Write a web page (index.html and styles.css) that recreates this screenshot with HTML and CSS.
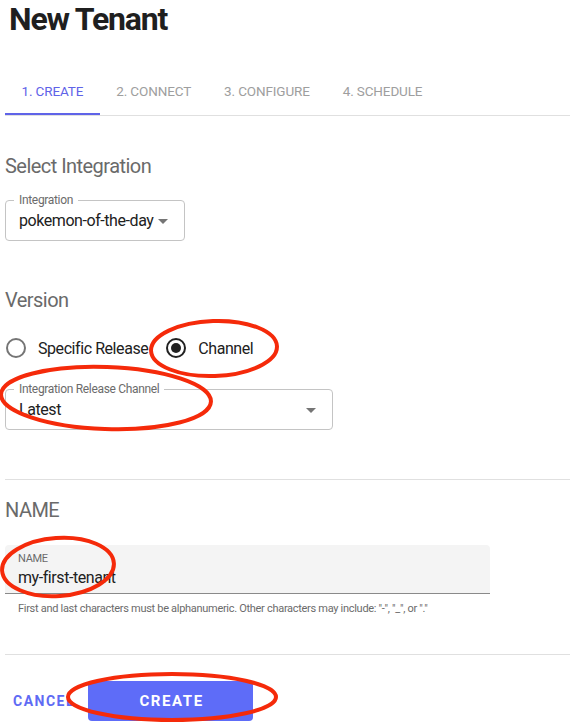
FILE: index.html
```html
<!DOCTYPE html>
<html>
<head>
<meta charset="utf-8">
<link rel="stylesheet" href="styles.css">
</head>
<body>
<div class="page">
  <h1 class="title">New Tenant</h1>
  <div class="tabs">
    <div class="tab active">1. Create</div>
    <div class="tab">2. Connect</div>
    <div class="tab">3. Configure</div>
    <div class="tab">4. Schedule</div>
  </div>

  <h2 class="heading h-integration">Select Integration</h2>
  <div class="outlined select-integration">
    <span class="notch-label">Integration</span>
    <span class="value">pokemon-of-the-day</span>
    <svg class="arrow" width="10" height="5" viewBox="0 0 10 5"><path d="M0 0L5 5L10 0Z" fill="#757575"/></svg>
  </div>

  <h2 class="heading h-version">Version</h2>
  <div class="radios">
    <label class="radio">
      <svg width="20" height="20" viewBox="0 0 20 20"><circle cx="10" cy="10" r="9" fill="none" stroke="#757575" stroke-width="2"/></svg>
      <span>Specific Release</span>
    </label>
    <label class="radio">
      <svg width="20" height="20" viewBox="0 0 20 20"><circle cx="10" cy="10" r="9" fill="none" stroke="#212121" stroke-width="2"/><circle cx="10" cy="10" r="5" fill="#212121"/></svg>
      <span>Channel</span>
    </label>
  </div>
  <div class="outlined select-channel">
    <span class="notch-label">Integration Release Channel</span>
    <span class="value">Latest</span>
    <svg class="arrow" width="10" height="5" viewBox="0 0 10 5"><path d="M0 0L5 5L10 0Z" fill="#757575"/></svg>
  </div>

  <hr class="divider d1">

  <h2 class="heading h-name">NAME</h2>
  <div class="filled">
    <span class="filled-label">NAME</span>
    <span class="filled-value">my-first-tenant</span>
  </div>
  <div class="helper">First and last characters must be alphanumeric. Other characters may include: "-", "_", or "."</div>

  <hr class="divider d2">

  <div class="actions">
    <button class="btn-text">Cancel</button>
    <button class="btn-primary">Create</button>
  </div>

  <svg class="annotations" width="570" height="726" viewBox="0 0 570 726">
    <g fill="none" stroke="#f52a0a" stroke-width="4">
      <ellipse cx="214" cy="348.5" rx="63" ry="27.5" transform="rotate(-2 214 348.5)"/>
      <ellipse cx="106" cy="398" rx="105" ry="31" transform="rotate(2 106 398)"/>
      <ellipse cx="58" cy="567" rx="56" ry="29" transform="rotate(-4 58 567)"/>
      <ellipse cx="172" cy="697" rx="104" ry="23"/>
    </g>
  </svg>
</div>
</body>
</html>
```

FILE: styles.css
```css
html, body {
  margin: 0;
  padding: 0;
  background: #ffffff;
}
* {
  letter-spacing: -0.027em;
}
body {
  font-family: Roboto, "Liberation Sans", sans-serif;
  color: #212121;
}
.page {
  position: relative;
  width: 570px;
  height: 726px;
  overflow: hidden;
  padding-left: 5px;
  box-sizing: border-box;
}
.title {
  margin: 1px 0 0 4px;
  font-size: 32px;
  line-height: 36px;
  font-weight: 700;
  color: #1f1f1f;
  letter-spacing: -0.037em;
}
.tabs {
  margin-top: 30px;
  display: flex;
  border-bottom: 1px solid #e0e0e0;
}
.tab {
  height: 48px;
  padding: 0 16.5px;
  display: flex;
  align-items: center;
  font-size: 13.5px;
  text-transform: uppercase;
  color: #9e9e9e;
  letter-spacing: -0.01em;
}
.tab.active {
  color: #5f63e8;
  box-shadow: inset 0 -2px 0 #5f63e8;
}
.heading {
  margin: 0;
  font-size: 20px;
  line-height: 24px;
  font-weight: 400;
  color: #6a6a6a;
}
.h-integration { margin-top: 38px; }
.h-version { margin-top: 47px; }
.h-name { margin-top: 18px; }

.outlined {
  position: relative;
  height: 41px;
  box-sizing: border-box;
  border: 1px solid #c4c4c4;
  border-radius: 4px;
  display: flex;
  align-items: center;
  padding: 0 16px 0 13px;
}
.select-integration {
  display: inline-flex;
  margin-top: 22px;
  gap: 5px;
}
.select-channel {
  width: 328px;
  margin-top: 20px;
  justify-content: space-between;
}
.notch-label {
  position: absolute;
  top: -8px;
  left: 8px;
  padding: 0 5px;
  background: #fff;
  font-size: 12px;
  line-height: 14px;
  color: #6b6b6b;
}
.value {
  font-size: 16px;
  color: #212121;
}
.arrow { flex: none; margin-top: 1px; }

.radios {
  margin-top: 15px;
  height: 42px;
  display: flex;
  align-items: center;
  padding-left: 1px;
}
.radio {
  display: flex;
  align-items: center;
  gap: 12px;
  font-size: 16px;
  color: #212121;
  margin-right: 18px;
}
.radio svg { flex: none; }

.divider {
  border: 0;
  border-top: 1px solid #e0e0e0;
  margin: 0;
}
.d1 { margin-top: 49px; }
.d2 { margin-top: 39px; }

.filled {
  margin-top: 23px;
  width: 485px;
  height: 49px;
  box-sizing: border-box;
  background: #f4f4f4;
  border-radius: 4px 4px 0 0;
  border-bottom: 1px solid #8a8a8a;
  padding: 7px 13px 0;
  display: flex;
  flex-direction: column;
}
.filled-label {
  font-size: 11px;
  line-height: 13px;
  color: #6b6b6b;
}
.filled-value {
  font-size: 16px;
  line-height: 20px;
  margin-top: 3px;
  color: #212121;
}
.helper {
  padding-left: 13px;
  margin-top: 8px;
  font-size: 11px;
  line-height: 13px;
  color: #6b6b6b;
}

.actions {
  margin-top: 26px;
  display: flex;
  align-items: center;
  gap: 5px;
}
button {
  font-family: Roboto, "Liberation Sans", sans-serif;
  border: 0;
  cursor: pointer;
  text-transform: uppercase;
}
.btn-text {
  background: transparent;
  color: #5f6bf4;
  font-size: 14px;
  font-weight: 700;
  letter-spacing: 1.5px;
  padding: 0 8px;
  height: 40px;
}
.btn-primary {
  background: #5e6cf8;
  color: #ffffff;
  font-size: 15px;
  font-weight: 700;
  letter-spacing: 1.6px;
  width: 165px;
  height: 40px;
  border-radius: 4px;
  padding: 0 0 0 2px;
}
.annotations {
  position: absolute;
  left: 0;
  top: 0;
  pointer-events: none;
}
```
